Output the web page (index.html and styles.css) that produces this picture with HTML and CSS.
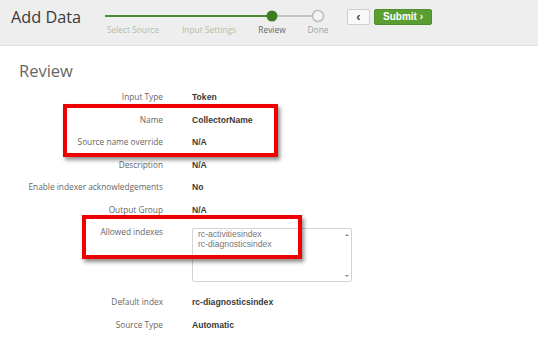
FILE: index.html
```html
<!DOCTYPE html>
<html>
<head>
<meta charset="utf-8">
<link rel="stylesheet" href="styles.css">
</head>
<body>
<div class="page">
  <header class="header">
    <h1 class="title">Add Data</h1>
    <div class="stepper">
      <svg class="track" width="244" height="16" viewBox="0 0 244 16">
        <line x1="5" y1="8" x2="172" y2="8" stroke="#4e8a30" stroke-width="2"/>
        <line x1="172" y1="8" x2="212" y2="8" stroke="#c4c4c4" stroke-width="2"/>
        <circle cx="172" cy="8" r="5.5" fill="#3f7c24"/>
        <circle cx="218" cy="8" r="5.5" fill="#f4f4f4" stroke="#bdbdbd" stroke-width="1.6"/>
      </svg>
      <div class="steps">
        <span class="step s1 done">Select Source</span>
        <span class="step s2 done">Input Settings</span>
        <span class="step s3 current">Review</span>
        <span class="step s4">Done</span>
      </div>
    </div>
    <div class="actions">
      <button class="btn back">&#8249;</button>
      <button class="btn submit">Submit &#8250;</button>
    </div>
  </header>

  <main class="content">
    <h2 class="heading">Review</h2>
    <div class="rows">
      <div class="row"><span class="label">Input Type</span><span class="value">Token</span></div>
      <div class="row"><span class="label">Name</span><span class="value">CollectorName</span></div>
      <div class="row"><span class="label">Source name override</span><span class="value">N/A</span></div>
      <div class="row"><span class="label">Description</span><span class="value">N/A</span></div>
      <div class="row"><span class="label">Enable indexer acknowledgements</span><span class="value">No</span></div>
      <div class="row"><span class="label">Output Group</span><span class="value">N/A</span></div>
      <div class="row row-list"><span class="label">Allowed indexes</span>
        <div class="listbox">
          <div class="list-items">
            <div>rc-activitiesindex</div>
            <div>rc-diagnosticsindex</div>
          </div>
          <div class="scroll"><span class="arrow up"></span><span class="arrow down"></span></div>
        </div>
      </div>
      <div class="row"><span class="label">Default index</span><span class="value">rc-diagnosticsindex</span></div>
      <div class="row"><span class="label">Source Type</span><span class="value">Automatic</span></div>
    </div>
    <div class="mark mark-name"></div>
    <div class="mark mark-indexes"></div>
  </main>
</div>
</body>
</html>
```

FILE: styles.css
```css
html, body {
  margin: 0;
  padding: 0;
  background: #ffffff;
}
.page {
  width: 538px;
  height: 362px;
  overflow: hidden;
  font-family: "Open Sans", "Liberation Sans", sans-serif;
}
.header {
  height: 45px;
  background: #eeeeee;
  border-bottom: 1px solid #dedede;
  display: flex;
  align-items: flex-start;
}
.title {
  margin: 0;
  padding: 6px 0 0 11px;
  width: 89px;
  font-size: 16.3px;
  font-weight: 400;
  color: #3a3a3a;
  line-height: 22px;
}
.stepper {
  padding-top: 8px;
  width: 244px;
}
.track {
  display: block;
}
.steps {
  display: grid;
  grid-template-columns: 66px 86px 40px 52px;
  height: 12px;
}
.step {
  text-align: center;
  font-size: 8.4px;
  line-height: 12px;
  color: #a2a2a2;
  white-space: nowrap;
}
.step.done {
  color: #b3c0a5;
}
.step.current {
  color: #666666;
}
.actions {
  display: flex;
  gap: 4px;
  padding: 9px 0 0 3px;
}
.btn {
  height: 16px;
  margin: 0;
  padding: 0;
  border-radius: 2px;
  font-family: "Liberation Sans", Arial, sans-serif;
  cursor: pointer;
}
.back {
  width: 23px;
  background: #f9f9f9;
  border: 1px solid #cfcfcf;
  color: #444;
  font-size: 13px;
  font-weight: bold;
  line-height: 12px;
}
.submit {
  width: 58px;
  background: #5a9e31;
  border: 1px solid #4f8f2a;
  color: #ffffff;
  font-weight: bold;
  font-size: 10px;
  line-height: 14px;
}
.content {
  position: relative;
  height: 316px;
}
.heading {
  margin: 0;
  padding: 14px 0 0 19px;
  font-size: 16.5px;
  font-weight: 400;
  color: #666666;
  line-height: 22px;
}
.rows {
  display: flex;
  flex-direction: column;
  padding-top: 4px;
}
.row {
  display: grid;
  grid-template-columns: 163px 1fr;
  column-gap: 29px;
  padding: 5px 0;
  line-height: 12.5px;
  align-items: start;
}
.label {
  text-align: right;
  font-size: 8.3px;
  color: #666666;
  white-space: nowrap;
}
.value {
  font-family: "Liberation Sans", Arial, sans-serif;
  font-size: 8.6px;
  font-weight: bold;
  color: #3a3a3a;
}
.row-list {
  padding-bottom: 9px;
}
.listbox {
  margin-top: 2px;
  width: 158px;
  height: 52px;
  border: 1px solid #d4d4d4;
  border-radius: 2px;
  display: flex;
  justify-content: space-between;
}
.list-items {
  padding: 0 0 0 5px;
  font-family: "Liberation Sans", Arial, sans-serif;
  font-size: 8.6px;
  line-height: 10px;
  color: #777777;
}
.scroll {
  width: 9px;
  display: flex;
  flex-direction: column;
  justify-content: space-between;
  align-items: center;
  padding: 5px 0 4px;
}
.arrow {
  width: 0;
  height: 0;
  border-left: 2px solid transparent;
  border-right: 2px solid transparent;
}
.arrow.up {
  border-bottom: 2px solid #8a8a8a;
}
.arrow.down {
  border-top: 2px solid #8a8a8a;
}
.mark {
  position: absolute;
  border: 4px solid #ee0000;
  box-shadow: 2px 3px 4px rgba(0, 0, 0, 0.45);
  box-sizing: border-box;
}
.mark-name {
  left: 63px;
  top: 58px;
  width: 215px;
  height: 53px;
}
.mark-indexes {
  left: 82px;
  top: 169px;
  width: 220px;
  height: 44px;
}
```
